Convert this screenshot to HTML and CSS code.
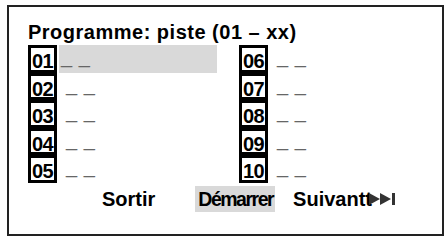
FILE: index.html
```html
<!DOCTYPE html>
<html lang="fr">
<head>
    <meta charset="UTF-8">
    <meta name="viewport" content="width=device-width, initial-scale=1.0">
    <title>Programme</title>
    <link rel="stylesheet" href="styles.css">
</head>
<body>
    <div class="frame">
        <div class="title">Programme: piste (01 – xx)</div>
        <div class="tracks">
            <div class="col">
                <div class="row"><span class="num">01</span><span class="slot active">_ _</span></div>
                <div class="row"><span class="num">02</span><span class="slot">_ _</span></div>
                <div class="row"><span class="num">03</span><span class="slot">_ _</span></div>
                <div class="row"><span class="num">04</span><span class="slot">_ _</span></div>
                <div class="row"><span class="num">05</span><span class="slot">_ _</span></div>
            </div>
            <div class="col">
                <div class="row"><span class="num">06</span><span class="slot">_ _</span></div>
                <div class="row"><span class="num">07</span><span class="slot">_ _</span></div>
                <div class="row"><span class="num">08</span><span class="slot">_ _</span></div>
                <div class="row"><span class="num">09</span><span class="slot">_ _</span></div>
                <div class="row"><span class="num">10</span><span class="slot">_ _</span></div>
            </div>
        </div>
        <div class="actions">
            <span class="btn exit">Sortir</span>
            <span class="btn start">Démarrer</span>
            <span class="btn next">Suivantt<svg class="skip" width="28" height="14" viewBox="0 0 28 14"><polygon points="0,1 11,7 0,13" fill="#333"/><polygon points="11,1 22,7 11,13" fill="#333"/><rect x="23" y="1" width="3" height="12" fill="#333"/></svg></span>
        </div>
    </div>
</body>
</html>
```

FILE: styles.css
```css
* {
    padding: 0;
    margin: 0;
    box-sizing: border-box;
}
body {
    background: #fff;
    font-family: "Liberation Sans", Arial, sans-serif;
    color: #000;
}
.frame {
    width: 437px;
    height: 231px;
    margin: 5px 0 0 7px;
    border: 2px solid #222;
    padding: 15px 0 0 19px;
}
.title {
    font-size: 20px;
    font-weight: bold;
    letter-spacing: 0.5px;
    line-height: 21px;
    margin-bottom: 2px;
}
.tracks {
    display: grid;
    grid-template-columns: 211px auto;
}
.row {
    display: flex;
    height: 27.6px;
}
.num {
    width: 29px;
    height: 27.6px;
    border: 3px solid #000;
    background: #fff;
    font-size: 20px;
    font-weight: bold;
    line-height: 22px;
    padding-top: 2px;
    text-align: center;
    letter-spacing: -0.5px;
}
.slot {
    font-size: 20px;
    color: #666;
    line-height: 23px;
    padding-left: 9px;
    word-spacing: 1px;
}
.slot.active {
    background: #d9d9d9;
    width: 158px;
    margin-left: 2px;
    padding-left: 2px;
}
.actions {
    display: flex;
    align-items: center;
    margin-top: 3px;
    height: 26px;
}
.btn {
    font-size: 20px;
    font-weight: bold;
    line-height: 26px;
}
.exit {
    margin-left: 74px;
}
.start {
    margin-left: 40px;
    background: #d9d9d9;
    padding: 0 2px 0 3px;
    font-size: 19.5px;
    letter-spacing: -1.5px;
}
.next {
    margin-left: 18px;
    display: flex;
    align-items: center;
}
.skip {
    margin-left: -3px;
    margin-top: 1px;
}
```
